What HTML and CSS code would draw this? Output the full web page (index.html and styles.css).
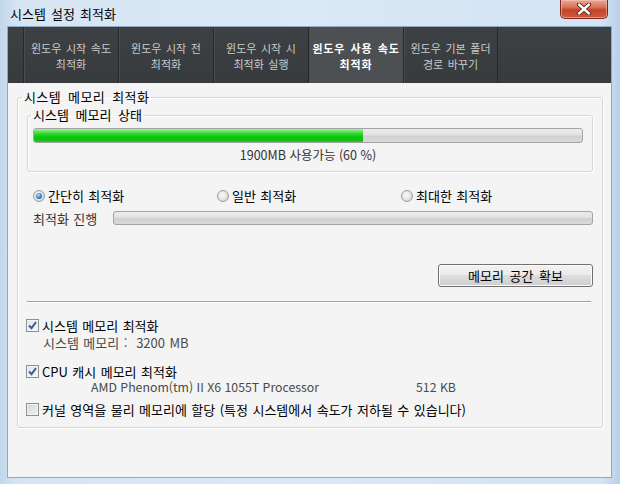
FILE: index.html
```html
<!DOCTYPE html>
<html lang="ko">
<head>
<meta charset="utf-8">
<title>시스템 설정 최적화</title>
<link rel="stylesheet" href="styles.css">
</head>
<body>
<div class="window">
  <div class="titlebar">
    <span class="title">시스템 설정 최적화</span>
    <div class="close"><svg width="16" height="12" viewBox="0 0 16 12"><path d="M3 1.5 L13 10.5 M13 1.5 L3 10.5" stroke="#5a1a10" stroke-width="4.2" stroke-linecap="round"/><path d="M3 1.5 L13 10.5 M13 1.5 L3 10.5" stroke="#fff" stroke-width="2.4" stroke-linecap="round"/></svg></div>
  </div>
  <div class="client">
    <div class="tabs">
      <div class="tab"><span>윈도우 시작 속도</span><span>최적화</span></div>
      <div class="tab"><span>윈도우 시작 전</span><span>최적화</span></div>
      <div class="tab"><span>윈도우 시작 시</span><span>최적화 실행</span></div>
      <div class="tab active"><span>윈도우 사용 속도</span><span>최적화</span></div>
      <div class="tab last"><span>윈도우 기본 폴더</span><span>경로 바꾸기</span></div>
    </div>
    <div class="panel">
      <fieldset class="group outer">
        <legend>시스템 메모리 최적화</legend>
        <fieldset class="group inner">
          <legend>시스템 메모리 상태</legend>
          <div class="progress"><div class="fill" style="width:60%"></div></div>
          <div class="status">1900MB 사용가능 (60 %)</div>
        </fieldset>
        <div class="radios">
          <label class="radio"><span class="dot checked"></span>간단히 최적화</label>
          <label class="radio"><span class="dot"></span>일반 최적화</label>
          <label class="radio"><span class="dot"></span>최대한 최적화</label>
        </div>
        <div class="progress-row">
          <span class="prog-label">최적화 진행</span>
          <div class="progress thin"></div>
        </div>
        <div class="btn-row"><button class="btn">메모리 공간 확보</button></div>
        <div class="sep"></div>
        <div class="check-row"><span class="box checked"><svg width="11" height="11" viewBox="0 0 11 11"><path d="M2 5.5 L4.5 8.2 L9 2.2" fill="none" stroke="#3d5f93" stroke-width="2"/></svg></span>시스템 메모리 최적화</div>
        <div class="sub">시스템 메모리 :&nbsp; 3200 MB</div>
        <div class="check-row"><span class="box checked"><svg width="11" height="11" viewBox="0 0 11 11"><path d="M2 5.5 L4.5 8.2 L9 2.2" fill="none" stroke="#3d5f93" stroke-width="2"/></svg></span>CPU 캐시 메모리 최적화</div>
        <div class="sub cpu"><span class="cpu-name">AMD Phenom(tm) II X6 1055T Processor</span><span>512 KB</span></div>
        <div class="check-row"><span class="box"></span>커널 영역을 물리 메모리에 할당 (특정 시스템에서 속도가 저하될 수 있습니다)</div>
      </fieldset>
    </div>
  </div>
</div>
</body>
</html>
```
FILE: styles.css
```css
* { box-sizing: border-box; }
html, body { margin: 0; padding: 0; }
body {
  width: 620px;
  height: 484px;
  overflow: hidden;
  font-family: "Noto Sans CJK KR", "Liberation Sans", sans-serif;
  font-size: 13px;
  word-spacing: 0.8px;
  color: #111;
}
.window {
  width: 620px;
  height: 484px;
  background: linear-gradient(90deg, #c2d7ec 0, #d7e5f3 3%, #dbe8f5 50%, #d3e3f2 97%, #b9d0e8 100%);
  display: flex;
  flex-direction: column;
}
.titlebar {
  height: 27px;
  flex: none;
  display: flex;
  justify-content: space-between;
  align-items: flex-start;
  padding: 0 12px 0 10px;
}
.title {
  line-height: 27px;
  color: #000;
  word-spacing: 1.5px;
}
.close {
  width: 48px;
  height: 19px;
  border: 1px solid #7a2a1c;
  border-top: none;
  border-radius: 0 0 5px 5px;
  background: linear-gradient(#e9a796 0, #d9735c 40%, #c8432c 55%, #cd5a3f 100%);
  box-shadow: inset 0 0 0 1px rgba(255,210,200,.5);
  display: flex;
  align-items: center;
  justify-content: center;
}
.client {
  margin: 0 9px 7px 8px;
  flex: 1;
  display: flex;
  flex-direction: column;
  box-shadow: 0 0 0 1px #8fa9c3;
  background: #f4f4f4;
}
.tabs {
  height: 56px;
  flex: none;
  display: flex;
  padding-left: 15px;
  background: linear-gradient(#3d4143, #373b3d);
}
.tab {
  width: 95px;
  border-left: 1px solid #26292b;
  box-shadow: inset 1px 0 #494d4f;
  color: #c9cbcc;
  font-size: 11px;
  word-spacing: 1.5px;
  text-align: center;
  line-height: 16px;
  display: flex;
  flex-direction: column;
  align-items: center;
  justify-content: center;
  padding-top: 1px;
}
.tab span { display: block; }
.tab.last { border-right: 1px solid #26292b; width: 95px; }
.tab.active {
  background: #4c5052;
  color: #fff;
  font-weight: bold;
  letter-spacing: 0.8px;
}
.panel {
  flex: 1;
  padding: 7px 8px 0 9px;
}
.group {
  margin: 0;
  min-width: 0;
  border: 1px solid #d5d5d5;
  border-radius: 3px;
  box-shadow: inset 1px 1px #fff, 1px 1px #fff;
}
.group legend {
  line-height: 14px;
  padding: 0 2px;
  color: #000;
}
.outer {
  padding: 0 9px 10px 9px;
}
.outer > legend { margin-left: -5px; word-spacing: 3px; letter-spacing: 0.4px; }
.inner {
  margin: 4px 0 0 0;
  padding: 6px 9px 9px 5px;
}
.inner > legend { margin-left: -2px; word-spacing: 3px; }
.progress {
  height: 15px;
  border: 1px solid #a3a3a3;
  border-radius: 3px;
  background: linear-gradient(#ececec 0, #e2e2e2 45%, #d0d0d0 55%, #dadada 100%);
  overflow: hidden;
}
.fill {
  height: 100%;
  background: linear-gradient(#a6eea6 0, #3fdc3f 30%, #12c812 55%, #10bd10 80%, #20cc20 100%);
}
.status {
  margin-top: 5px;
  line-height: 14px;
  text-align: center;
  color: #333;
  font-size: 12.5px;
  word-spacing: 0;
}
.radios {
  margin-top: 16px;
  display: grid;
  grid-template-columns: 184px 184px 1fr;
  padding-left: 6px;
  line-height: 16px;
}
.radio {
  display: flex;
  align-items: center;
  gap: 3px;
  color: #000;
}
.dot {
  width: 12px;
  height: 12px;
  border-radius: 50%;
  border: 1px solid #9a9a9a;
  background: radial-gradient(circle at 40% 40%, #fafafa 0, #dcdcdc 70%, #cfcfcf 100%);
  display: flex;
  align-items: center;
  justify-content: center;
}
.dot.checked::after {
  content: "";
  width: 6px;
  height: 6px;
  border-radius: 50%;
  background: radial-gradient(circle at 40% 35%, #bfe4ff 0, #3c8fd6 45%, #1a4f8e 100%);
}
.progress-row {
  margin-top: 7px;
  display: flex;
  align-items: center;
  padding-left: 6px;
  height: 14px;
}
.prog-label {
  width: 80px;
  flex: none;
  color: #333;
}
.progress.thin {
  flex: 1;
  height: 14px;
}
.btn-row {
  margin-top: 39px;
  display: flex;
  justify-content: flex-end;
}
.btn {
  width: 155px;
  height: 23px;
  font: inherit;
  word-spacing: 2px;
  color: #000;
  border: 1px solid #707070;
  border-radius: 3px;
  background: linear-gradient(#f2f2f2 0, #ebebeb 45%, #dddddd 50%, #cfcfcf 100%);
  box-shadow: inset 0 0 0 1px #fcfcfc;
  padding: 0;
}
.sep {
  margin: 14px 2px 14px 0;
  height: 2px;
  border-top: 1px solid #a0a0a0;
  border-bottom: 1px solid #fff;
}
.check-row {
  display: flex;
  align-items: center;
  gap: 3px;
  height: 16px;
  margin-left: -1px;
  color: #000;
}
.box {
  width: 13px;
  height: 13px;
  border: 1px solid #8e8f8f;
  background: linear-gradient(135deg, #d4d4d4, #f3f3f3);
  box-shadow: inset 0 0 0 1px #f4f4f4;
  display: flex;
  align-items: center;
  justify-content: center;
  flex: none;
}
.box.checked { background: linear-gradient(135deg, #dfe6ee, #f6f8fa); }
.sub {
  margin: 2px 0 12px 16px;
  height: 16px;
  line-height: 16px;
  color: #4a4a4a;
}
.sub.cpu {
  display: flex;
  padding-left: 48px;
  margin-top: 0;
  margin-bottom: 6px;
  font-size: 12.3px;
  word-spacing: 0;
}
.cpu-name { width: 325px; }
```
